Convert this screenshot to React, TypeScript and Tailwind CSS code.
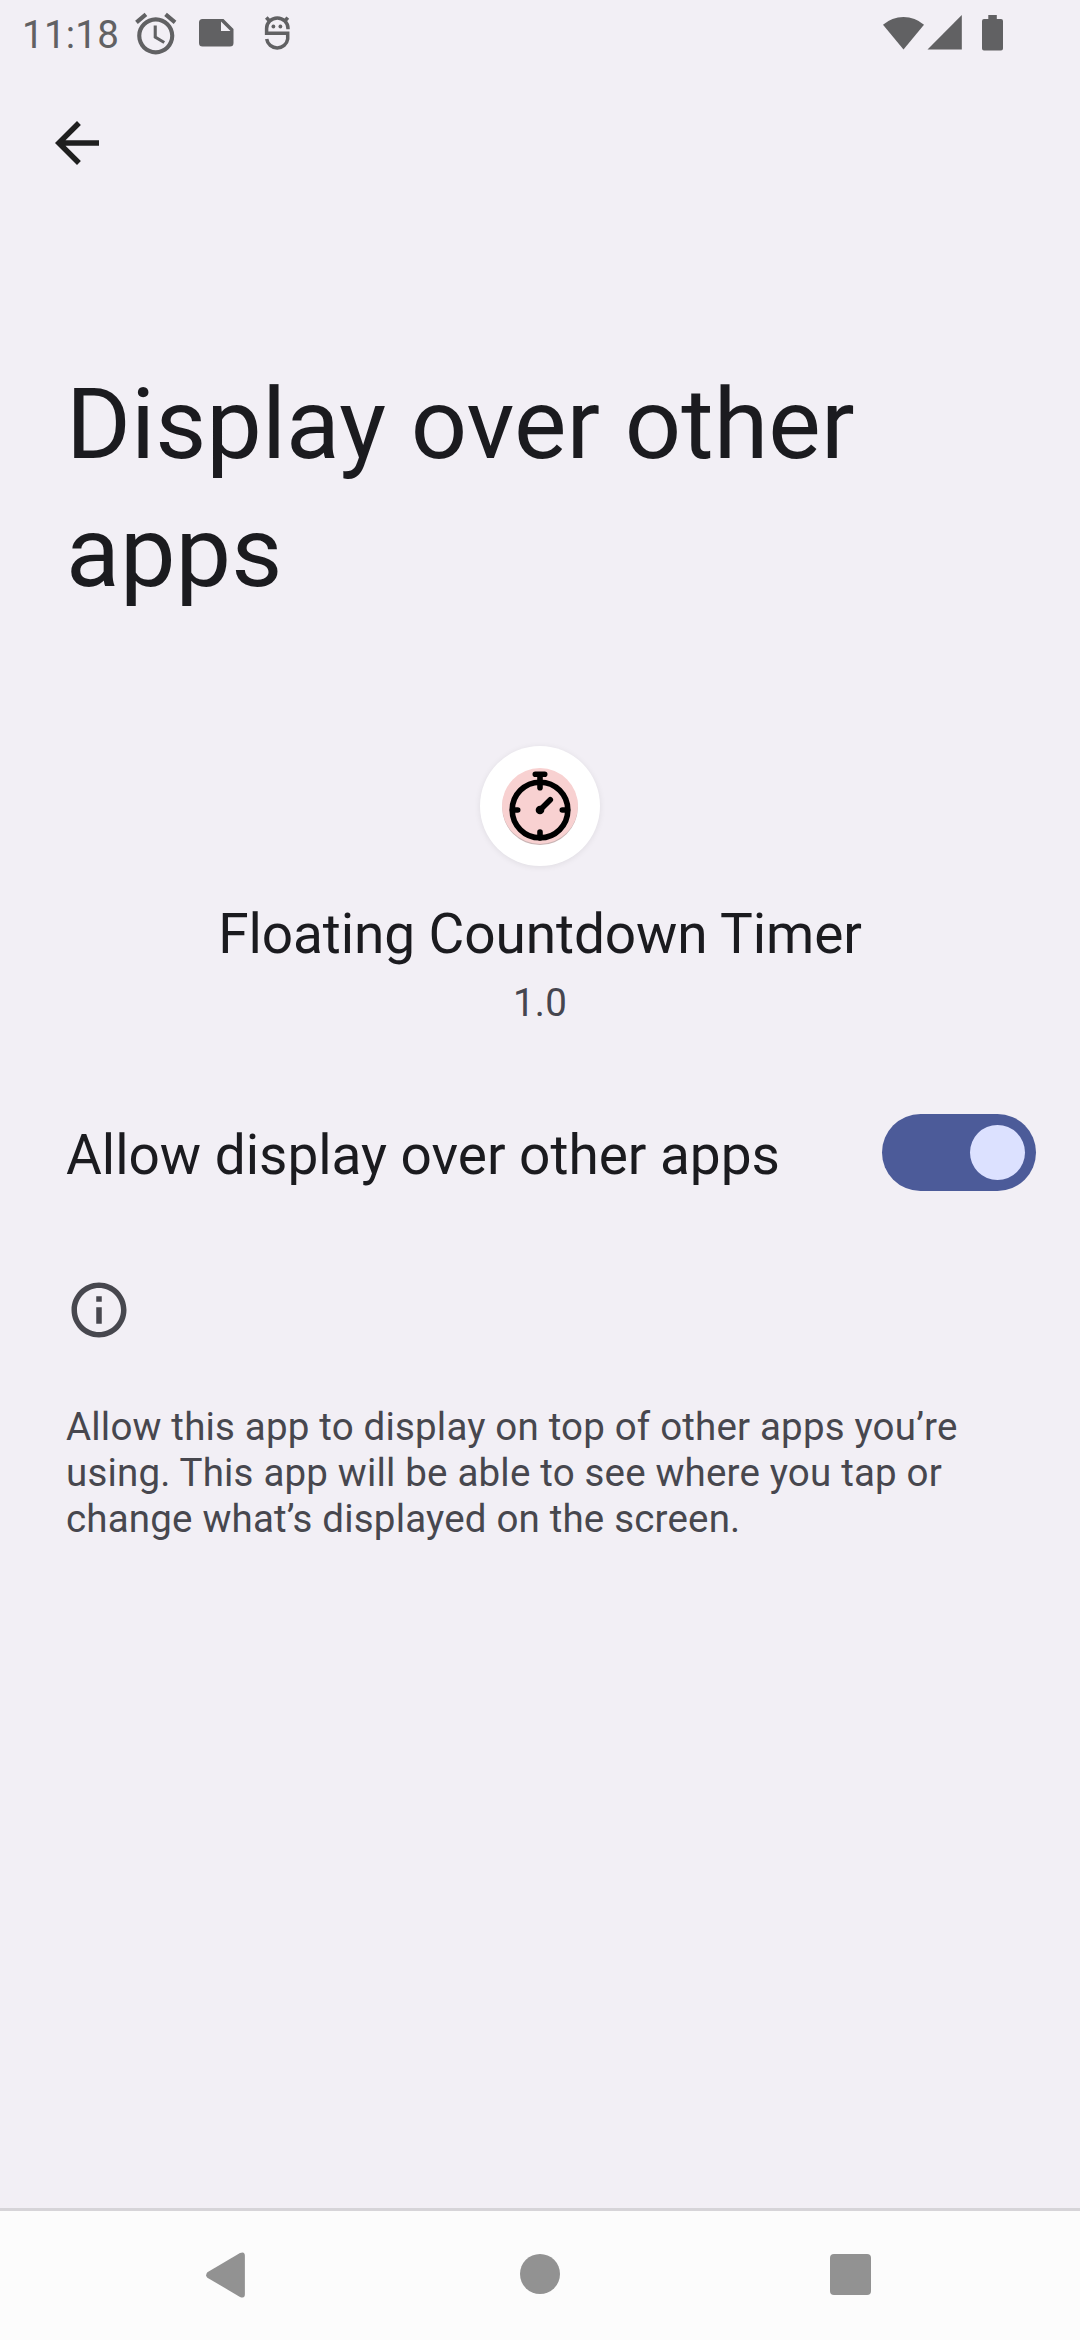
import type { ReactNode } from "react";

function StatusBar() {
  return (
    <header className="flex h-[66px] shrink-0 items-start text-[#616163]">
      <span className="ml-[22px] mt-[12px] w-[97px] whitespace-nowrap text-[38.5px] leading-[45px] tracking-[0.25px]">11:18</span>
      <svg className="ml-[12px] mt-[8.5px] size-[49.5px] shrink-0" viewBox="0 0 24 24" fill="currentColor">
        <path d="M22 5.72l-4.6-3.86-1.29 1.53 4.6 3.86L22 5.72zM7.88 3.39L6.6 1.86 2 5.71l1.29 1.53 4.59-3.85zM12.5 8H11v6l4.75 2.85.75-1.23-4-2.37V8zM12 4c-4.97 0-9 4.03-9 9s4.02 9 9 9c4.97 0 9-4.03 9-9s-4.03-9-9-9zm0 16c-3.87 0-7-3.13-7-7s3.13-7 7-7 7 3.13 7 7-3.13 7-7 7z" />
      </svg>
      <svg className="ml-[18.5px] mt-[19px] h-[28px] w-[35px] shrink-0" viewBox="0 0 35 28" fill="currentColor">
        <path fillRule="evenodd" d="M3.5 0H24.5L34.5 10V24a3.5 3.5 0 0 1-3.5 3.5H3.5A3.5 3.5 0 0 1 0 24V3.5A3.5 3.5 0 0 1 3.5 0ZM22 2.5V12H31.5Z" />
      </svg>
      <svg className="ml-[30px] mt-[15px] h-[37px] w-[27px] shrink-0" viewBox="0 0 27 37" fill="none" stroke="currentColor" strokeWidth="3.5">
        <path d="M24 14.2V13.5a10.7 10.5 0 0 0-21.4 0V18.3H23.7V24a10.6 10.3 0 0 1-21 0" />
        <path d="M2.3 2.6 6.5 7M23.8 2.6 20 7" strokeWidth="3.6" />
        <circle cx="9.4" cy="11.5" r="1.9" fill="currentColor" stroke="none" />
        <circle cx="16.4" cy="11.5" r="1.9" fill="currentColor" stroke="none" />
      </svg>
      <div className="ml-auto mr-[77px] mt-[15px] flex">
        <svg className="h-[36px] w-[41px]" viewBox="0 0 41 36" fill="currentColor">
          <path d="M0 9.7A31 31 0 0 1 41 9.7L20.5 34.5Z" />
        </svg>
        <svg className="ml-[3px] h-[36px] w-[35px]" viewBox="0 0 35 36" fill="currentColor">
          <path d="M.5 34.6 34.8 0V34.6Z" />
        </svg>
        <svg className="ml-[20px] h-[36px] w-[21px]" viewBox="0 0 21 36" fill="currentColor">
          <path d="M6.3 0H14.8V4H19A2 2 0 0 1 21 6V33.5A2 2 0 0 1 19 35.5H2A2 2 0 0 1 0 33.5V6A2 2 0 0 1 2 4H6.3Z" />
        </svg>
      </div>
    </header>
  );
}

function AppIcon() {
  return (
    <div className="flex size-[120px] items-center justify-center rounded-full bg-white shadow-[0_1px_6px_rgba(0,0,0,0.08)]">
      <svg className="size-[120px] overflow-visible" viewBox="0 0 120 120" fill="none">
        <circle cx="60" cy="61.3" r="37.8" fill="#c9b4b4" />
        <circle cx="60" cy="60" r="38" fill="#f8d1d1" />
        <g stroke="#000" strokeWidth="5.6" strokeLinecap="round">
          <circle cx="60" cy="64" r="27.8" />
          <path d="M55.3 28.3H64.7M60 28.3V41.7M60 92V86M32.5 64H37.7M87.5 64H82.3M60 64 70.3 53.7" />
        </g>
        <circle cx="60" cy="64" r="4.3" fill="#000" />
      </svg>
    </div>
  );
}

function Switch() {
  return (
    <button role="switch" aria-checked="true" className="flex h-[77px] w-[154px] items-center justify-end rounded-full bg-[#4c5b99] pr-[11px]">
      <span className="size-[55px] rounded-full bg-[#dce1ff]" />
    </button>
  );
}

function NavButton({ children, label }: { children: ReactNode; label: string }) {
  return (
    <button aria-label={label} className="flex h-full w-[311px] items-center justify-center">
      {children}
    </button>
  );
}

function NavigationBar() {
  return (
    <nav className="flex h-[132px] shrink-0 justify-center border-t-[3px] border-[#d6d4d8] bg-[#fcfcfc] pb-[3px] text-[#929292]">
      <NavButton label="Back">
        <svg className="-ml-[7px] mt-px h-[46px] w-[39px]" viewBox="0 0 39 46" fill="currentColor">
          <path d="M1.4 20.3 34 1.1Q38.9-1 38.9 4V42Q38.9 47 34 44.9L1.4 25.7Q-1.1 23.5 1.4 20.3Z" />
        </svg>
      </NavButton>
      <NavButton label="Home">
        <span className="size-[40px] rounded-full bg-[#929292]" />
      </NavButton>
      <NavButton label="Overview">
        <span className="-ml-px mt-px size-[41px] rounded-[4px] bg-[#929292]" />
      </NavButton>
    </nav>
  );
}

export default function App() {
  return (
    <div className="flex h-[2340px] w-[1080px] flex-col overflow-hidden bg-[#f2eff5] font-['Roboto',sans-serif] text-[#1b1b1f]">
      <StatusBar />
      <main className="flex flex-1 flex-col">
        <button aria-label="Navigate up" className="ml-[44px] mt-[44px] size-[66px] text-[#1f1f1f]">
          <svg className="size-[66px]" viewBox="0 0 24 24" fill="currentColor">
            <path d="M20 11H7.83l5.59-5.59L12 4l-8 8 8 8 1.41-1.41L7.83 13H20v-2z" />
          </svg>
        </button>
        <h1 className="mx-[66px] mt-[184px] text-[99px] leading-[128px] tracking-[0.06px]">Display over other apps</h1>
        <section className="mt-[130px] flex flex-col items-center">
          <AppIcon />
          <h2 className="mt-[36px] text-[55px] leading-[64px] tracking-[-0.1px]">Floating Countdown Timer</h2>
          <p className="mt-[14px] text-[38.5px] leading-[45px] tracking-[0.17px] text-[#46464f]">1.0</p>
        </section>
        <section className="ml-[66px] mr-[44px] mt-[89px] flex h-[77px] items-center justify-between">
          <span className="mt-[5px] text-[55px] leading-[64px] tracking-[-0.04px]">Allow display over other apps</span>
          <Switch />
        </section>
        <section className="mx-[66px] mt-[86px] flex flex-col text-[#47474e]">
          <svg className="size-[66px]" viewBox="0 0 24 24" fill="currentColor">
            <path d="M11 7h2v2h-2zm0 4h2v6h-2zm1-9C6.48 2 2 6.48 2 12s4.48 10 10 10 10-4.48 10-10S17.52 2 12 2zm0 18c-4.41 0-8-3.59-8-8s3.59-8 8-8 8 3.59 8 8-3.59 8-8 8z" />
          </svg>
          <p className="mt-[61px] text-[38.5px] leading-[46px] tracking-[0.18px]">
            Allow this app to display on top of other apps you’re using. This app will be able to see where you tap or change what’s displayed on the screen.
          </p>
        </section>
      </main>
      <NavigationBar />
    </div>
  );
}
